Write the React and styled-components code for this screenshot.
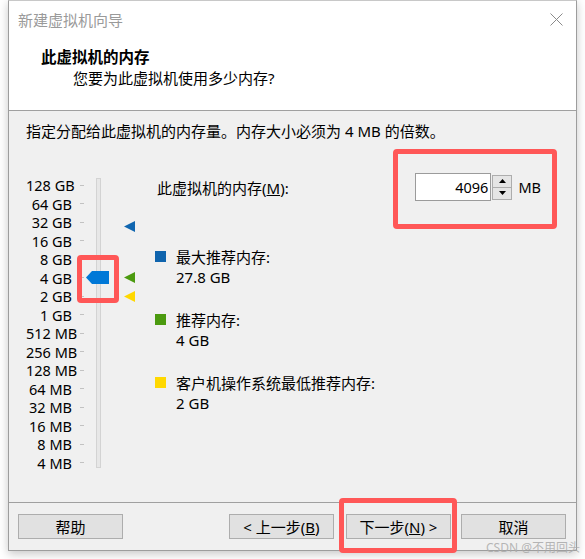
import React from 'react';
import styled, { createGlobalStyle } from 'styled-components';

const GlobalStyle = createGlobalStyle`
  html, body { margin: 0; padding: 0; background: #ffffff; }
  body {
    font-family: "Noto Sans", "Noto Sans CJK SC", sans-serif;
    font-size: 15px;
    color: #000;
  }
`;

const Page = styled.div`
  position: relative;
  width: 585px;
  height: 559px;
  padding-left: 8px;
  box-sizing: border-box;
  overflow: hidden;
`;

const Window = styled.div`
  width: 569px;
  height: 551px;
  box-sizing: border-box;
  border: 1px solid #9d9d9d;
  border-top-color: #c8c8c8;
  background: #f0f0f0;
  box-shadow: 0 3px 9px rgba(0, 0, 0, 0.22);
  display: flex;
  flex-direction: column;
`;

const TitleBar = styled.div`
  height: 37px;
  flex: none;
  display: flex;
  align-items: center;
  justify-content: space-between;
  padding: 0 13px 0 9px;
  background: #fff;
  color: #9a9a9a;
  font-size: 15px;
`;

const Header = styled.div`
  height: 63px;
  flex: none;
  padding: 9px 0 0 32px;
  background: #fff;
  border-bottom: 1px solid #a0a0a0;
`;

const HeaderTitle = styled.div`
  font-weight: bold;
  font-size: 15.5px;
  line-height: 20px;
`;

const HeaderSub = styled.div`
  margin-top: 1px;
  padding-left: 32px;
  line-height: 21px;
`;

const Body = styled.div`
  flex: 1;
  padding: 10px 35px 0 17px;
`;

const Instruction = styled.div`
  line-height: 20px;
  white-space: nowrap;
`;

const Main = styled.div`
  display: flex;
  margin-top: 30px;
`;

const SliderArea = styled.div`
  position: relative;
  flex: none;
  width: 129px;
  display: flex;
`;

const Scale = styled.div`
  padding-top: 5px;
  display: flex;
  flex-direction: column;
`;

const ScaleRow = styled.div`
  height: 18.5px;
  display: flex;
  align-items: center;
`;

const ScaleLabel = styled.span`
  width: 46px;
  text-align: right;
  white-space: nowrap;
  font-size: 14.5px;
  line-height: 18.5px;
`;

const Tick = styled.span`
  width: 4px;
  height: 1px;
  margin-left: 8px;
  background: #c2c2c2;
`;

const Track = styled.div`
  margin: 7px 0 0 12px;
  width: 5px;
  height: 290px;
  box-sizing: border-box;
  border: 1px solid #d3d3d3;
  background: #e7e7e7;
`;

const Thumb = styled.svg`
  position: absolute;
  left: 60px;
  width: 23px;
  height: 13px;
`;

const Marker = styled.svg`
  position: absolute;
  left: 98px;
  width: 11px;
  height: 11px;
`;

const InfoColumn = styled.div`
  flex: 1;
  padding-top: 2px;
  display: flex;
  flex-direction: column;
`;

const MemoryRow = styled.div`
  height: 28px;
  display: flex;
  align-items: center;
`;

const MemoryLabel = styled.span`
  padding-left: 2px;
  white-space: nowrap;
`;

const InputGroup = styled.div`
  margin-left: auto;
  display: flex;
  align-items: center;
  font-size: 14.5px;
`;

const NumberBox = styled.div`
  width: 76px;
  height: 28px;
  box-sizing: border-box;
  border: 1px solid #9b9b9b;
  background: #fff;
  display: flex;
  align-items: center;
  justify-content: flex-end;
  padding-right: 2px;
`;

const Spinner = styled.div`
  margin-left: 1px;
  display: flex;
  flex-direction: column;
`;

const SpinButton = styled.div`
  width: 20px;
  height: 13px;
  box-sizing: border-box;
  border: 1px solid #adadad;
  background: #e5e5e5;
  display: flex;
  align-items: center;
  justify-content: center;
  & + & { border-top: none; height: 12px; }
`;

const Unit = styled.span`
  margin-left: 6px;
`;

const Legend = styled.div`
  margin-top: 46px;
  display: flex;
  flex-direction: column;
  gap: 23px;
`;

const LegendItem = styled.div`
  display: grid;
  grid-template-columns: 11px 1fr;
  column-gap: 10px;
  line-height: 20px;
`;

const Swatch = styled.span`
  width: 11px;
  height: 11px;
  margin-top: 4px;
  background: ${p => p.$color};
`;

const Footer = styled.div`
  height: 36px;
  flex: none;
  border-top: 1px solid #a0a0a0;
  padding: 11px 10px 0 9px;
  display: flex;
  align-items: flex-start;
`;

const Button = styled.button`
  width: 105px;
  height: 25px;
  box-sizing: border-box;
  border: 1px solid #adadad;
  background: #e1e1e1;
  font-family: inherit;
  font-size: 15px;
  color: #000;
  padding: 0;
  display: flex;
  align-items: center;
  justify-content: center;
  white-space: pre;
  margin-left: ${p => p.$gap || 0}px;
`;

const Callout = styled.div`
  position: absolute;
  box-sizing: border-box;
  border: 5px solid #ff5757;
  border-radius: 4px;
  pointer-events: none;
`;

const Watermark = styled.div`
  position: absolute;
  right: 5px;
  bottom: 4px;
  font-size: 12px;
  line-height: 14px;
  color: rgba(170, 170, 170, 0.85);
  white-space: nowrap;
`;

const scaleLabels = [
  '128 GB', '64 GB', '32 GB', '16 GB', '8 GB', '4 GB', '2 GB', '1 GB',
  '512 MB', '256 MB', '128 MB', '64 MB', '32 MB', '16 MB', '8 MB', '4 MB',
];

const yFor = (mb) => 14.25 + (17 - Math.log2(mb)) * 18.5;

const markers = [
  { mb: 27.8 * 1024, color: '#1066b0' },
  { mb: 4096, color: '#4b9a0f' },
  { mb: 2048, color: '#ffd800' },
];

const legend = [
  { color: '#0f64ad', title: '最大推荐内存:', value: '27.8 GB' },
  { color: '#4b9a0f', title: '推荐内存:', value: '4 GB' },
  { color: '#ffd800', title: '客户机操作系统最低推荐内存:', value: '2 GB' },
];

export default function App() {
  return (
    <Page>
      <GlobalStyle />
      <Window>
        <TitleBar>
          <span>新建虚拟机向导</span>
          <svg width="13" height="13" viewBox="0 0 13 13">
            <path d="M0.5 0.5 L12.5 12.5 M12.5 0.5 L0.5 12.5" stroke="#8a8a8a" strokeWidth="1" fill="none" />
          </svg>
        </TitleBar>
        <Header>
          <HeaderTitle>此虚拟机的内存</HeaderTitle>
          <HeaderSub>您要为此虚拟机使用多少内存?</HeaderSub>
        </Header>
        <Body>
          <Instruction>指定分配给此虚拟机的内存量。内存大小必须为 4 MB 的倍数。</Instruction>
          <Main>
            <SliderArea>
              <Scale>
                {scaleLabels.map(l => (
                  <ScaleRow key={l}>
                    <ScaleLabel>{l}</ScaleLabel>
                    <Tick />
                  </ScaleRow>
                ))}
              </Scale>
              <Track />
              <Thumb viewBox="0 0 23 13" style={{ top: yFor(4096) - 6.5 }}>
                <polygon points="0,6.5 6,0 23,0 23,13 6,13" fill="#0078d7" />
              </Thumb>
              {markers.map(m => (
                <Marker key={m.mb} viewBox="0 0 11 11" style={{ top: yFor(m.mb) - 5.5 }}>
                  <polygon points="0,5.5 11,0 11,11" fill={m.color} />
                </Marker>
              ))}
            </SliderArea>
            <InfoColumn>
              <MemoryRow>
                <MemoryLabel>此虚拟机的内存(<u>M</u>):</MemoryLabel>
                <InputGroup>
                  <NumberBox>4096</NumberBox>
                  <Spinner>
                    <SpinButton>
                      <svg width="7" height="4" viewBox="0 0 7 4"><polygon points="3.5,0 7,4 0,4" fill="#000" /></svg>
                    </SpinButton>
                    <SpinButton>
                      <svg width="7" height="4" viewBox="0 0 7 4"><polygon points="0,0 7,0 3.5,4" fill="#000" /></svg>
                    </SpinButton>
                  </Spinner>
                  <Unit>MB</Unit>
                </InputGroup>
              </MemoryRow>
              <Legend>
                {legend.map(item => (
                  <LegendItem key={item.title}>
                    <Swatch $color={item.color} />
                    <span>{item.title}</span>
                    <span />
                    <span>{item.value}</span>
                  </LegendItem>
                ))}
              </Legend>
            </InfoColumn>
          </Main>
        </Body>
        <Footer>
          <Button>帮助</Button>
          <Button style={{ marginLeft: 'auto' }}>{'< 上一步('}<u>B</u>{')'}</Button>
          <Button $gap={12}>{'下一步('}<u>N</u>{') >'}</Button>
          <Button $gap={10}>取消</Button>
        </Footer>
      </Window>
      <Callout style={{ left: 77, top: 255, width: 42, height: 48 }} />
      <Callout style={{ left: 393, top: 149, width: 164, height: 80 }} />
      <Callout style={{ left: 339, top: 498, width: 118, height: 55 }} />
      <Watermark>CSDN @不用回头</Watermark>
    </Page>
  );
}
